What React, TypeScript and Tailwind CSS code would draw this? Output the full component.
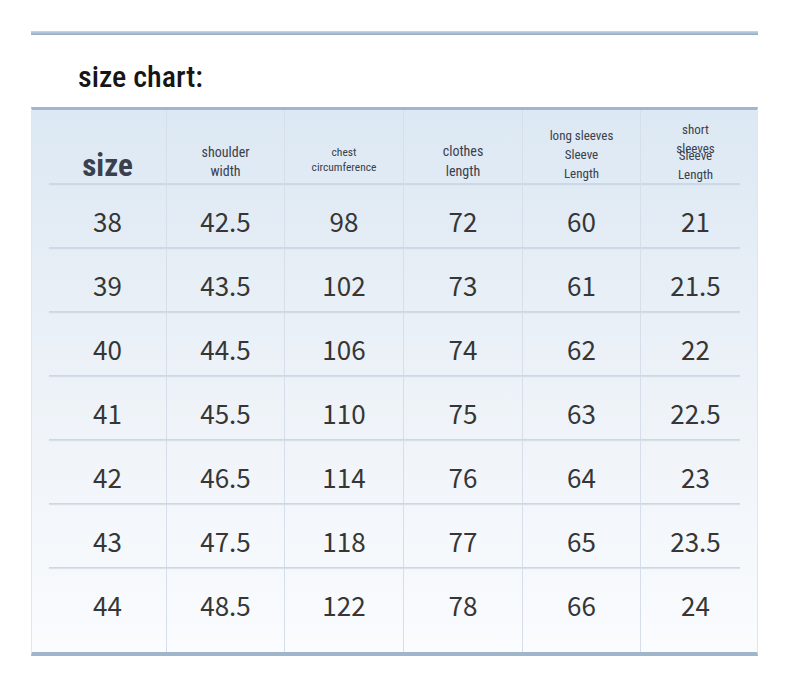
import React from "react";

const rows = [
  ["38", "42.5", "98", "72", "60", "21"],
  ["39", "43.5", "102", "73", "61", "21.5"],
  ["40", "44.5", "106", "74", "62", "22"],
  ["41", "45.5", "110", "75", "63", "22.5"],
  ["42", "46.5", "114", "76", "64", "23"],
  ["43", "47.5", "118", "77", "65", "23.5"],
  ["44", "48.5", "122", "78", "66", "24"],
];

const cond = { fontFamily: 'Roboto, "DejaVu Sans", sans-serif' };
const num = { fontFamily: '"Noto Sans CJK SC", "Noto Sans", sans-serif' };

function Sep() {
  return <div className="h-px mx-[17px] bg-[#cdd8e4] shadow-[0_1px_1px_rgba(150,170,195,0.35)]" />;
}

export default function App() {
  const colCls = "grid grid-cols-[134px_118px_119px_119px_118px_119px]";
  return (
    <div className="w-[790px] h-[697px] bg-white relative">
      <div className="pt-[31px] pl-[31px]">
        <div className="w-[727px] h-[4px] bg-gradient-to-b from-[#c9d8e7] to-[#90aac3]" />
        <div className="h-[72px] pl-[47px] pt-[27px]">
          <div className="text-[30px] leading-none text-[#161616] font-medium font-stretch-condensed" style={cond}>
            size chart:
          </div>
        </div>
        <div className="w-[727px] border-t-[3px] border-t-[#9fb6cb] border-b-[4px] border-b-[#9fb5ca] border-l border-l-[#dfe6ee] border-r border-r-[#dfe6ee] bg-gradient-to-b from-[#dce8f3] via-[#edf2f8] to-[#fafcfe]">
          <div className={`${colCls} h-[73px] text-[#3a404c] font-stretch-condensed`} style={cond}>
            <div className="flex items-start justify-center pl-[17px] pt-[40px]">
              <span className="text-[31px] leading-none font-bold">size</span>
            </div>
            <div className="border-l border-[#d6dfe9] flex flex-col items-center pt-[33px] text-[14px] leading-[19px]">
              <span>shoulder</span>
              <span>width</span>
            </div>
            <div className="border-l border-[#d6dfe9] flex flex-col items-center pt-[35px] text-[11.5px] leading-[15px]">
              <span>chest</span>
              <span>circumference</span>
            </div>
            <div className="border-l border-[#d6dfe9] flex flex-col items-center pt-[31px] text-[14px] leading-[20px]">
              <span>clothes</span>
              <span>length</span>
            </div>
            <div className="border-l border-[#d6dfe9] flex flex-col items-center pt-[16px] text-[13px] leading-[19px]">
              <span>long sleeves</span>
              <span>Sleeve</span>
              <span>Length</span>
            </div>
            <div className="border-l border-[#d6dfe9] relative flex flex-col items-center pr-[9px] pt-[36px] text-[13px] leading-[19px]">
              <span className="absolute top-[10px] left-0 right-[9px] flex flex-col items-center">
                <span>short</span>
                <span>sleeves</span>
              </span>
              <span>Sleeve</span>
              <span>Length</span>
            </div>
          </div>
          {rows.map((r, i) => (
            <React.Fragment key={i}>
              <Sep />
              <div className={`${colCls} ${i === rows.length - 1 ? "h-[84px]" : "h-[63px]"} text-[#363636]`} style={num}>
                {r.map((c, j) => (
                  <div
                    key={j}
                    className={`${j > 0 ? "border-l border-[#d6dfe9]" : "pl-[17px]"} ${j === 5 ? "pr-[9px]" : ""} flex justify-center pt-[24px] text-[26px] leading-none`}
                  >
                    {c}
                  </div>
                ))}
              </div>
            </React.Fragment>
          ))}
        </div>
      </div>
    </div>
  );
}
